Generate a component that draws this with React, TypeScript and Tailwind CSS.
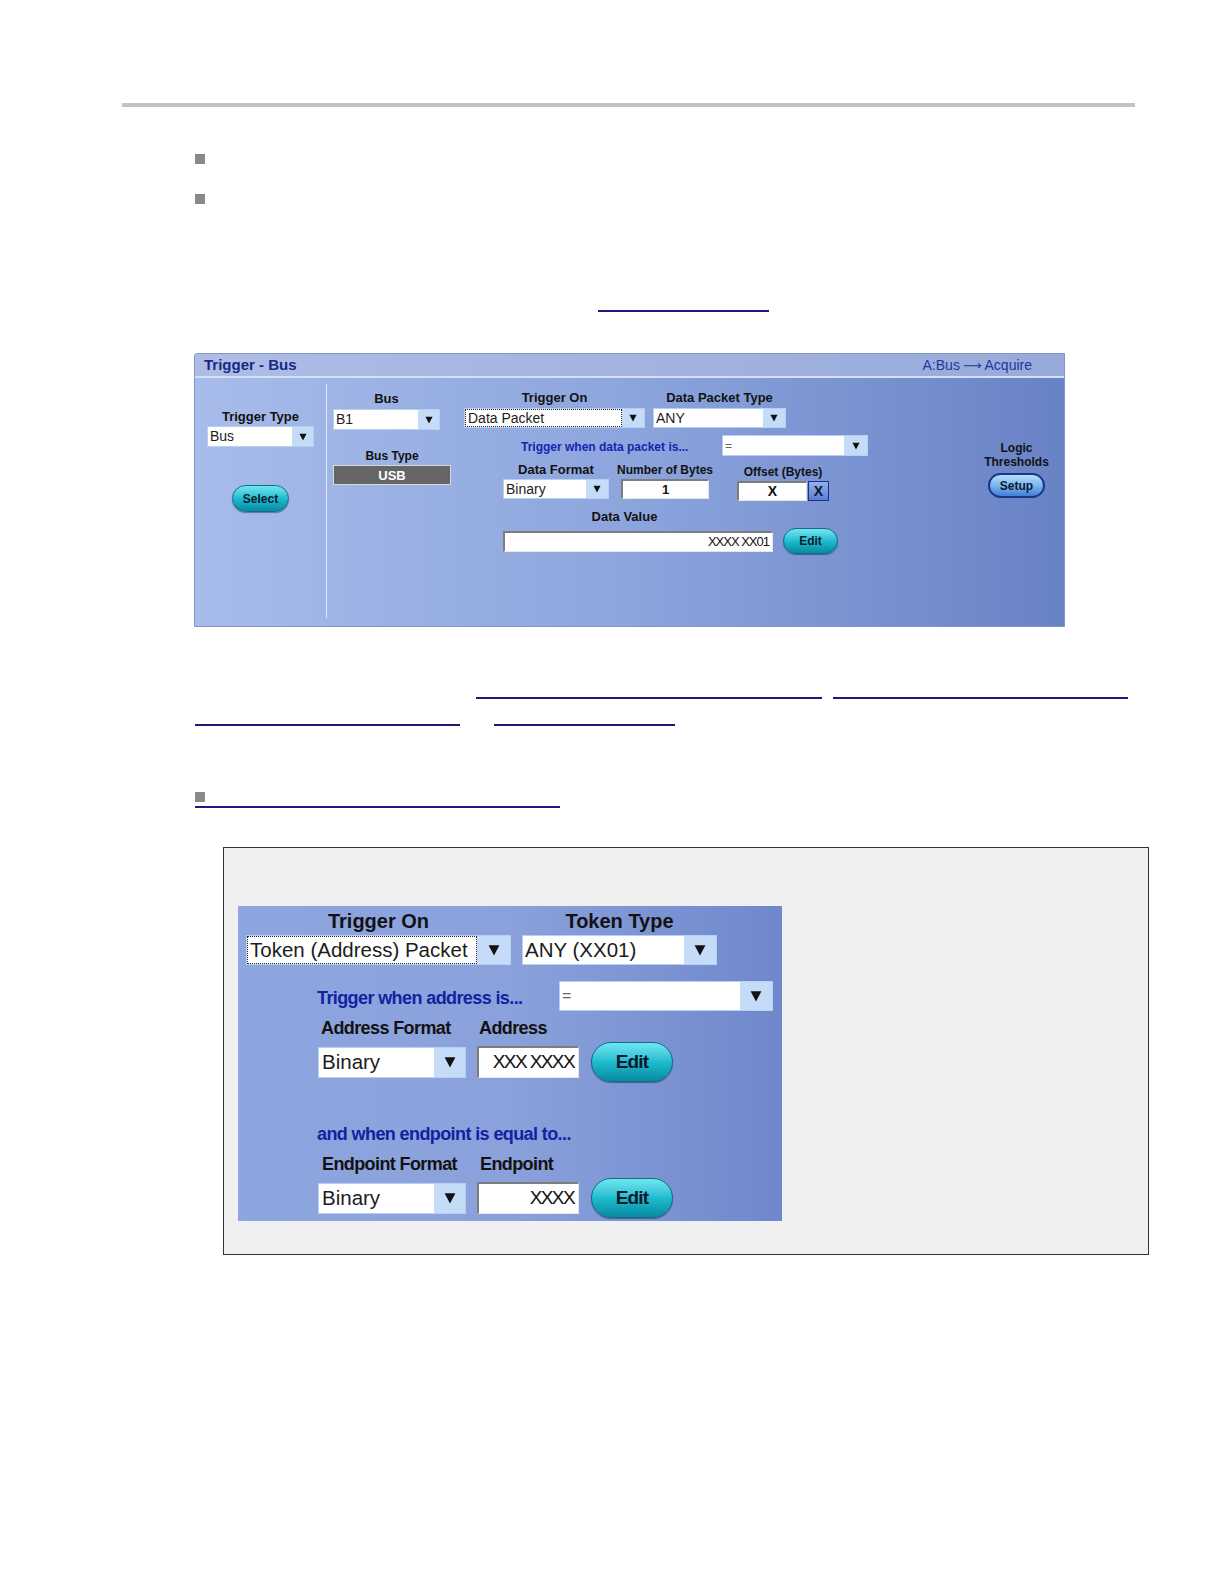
import React from "react"

type DropProps = {
  className: string
  arrowCls: string
  textCls: string
  triCls: string
  text: string
  focus?: boolean
}

function Tri({ className }: { className: string }) {
  return (
    <svg viewBox="0 0 10 10" className={className} aria-hidden="true">
      <polygon points="0.5,1 9.5,1 5,9.5" fill="#111" />
    </svg>
  )
}

function Drop({ className, arrowCls, textCls, triCls, text, focus }: DropProps) {
  return (
    <div className={`flex border border-[#b6d0f2] bg-white ${className}`}>
      <div
        className={`flex min-w-0 flex-1 items-center overflow-hidden whitespace-nowrap pl-[2px] text-[#1c1c1c] ${
          focus ? "border border-dotted border-[#222]" : ""
        } ${textCls}`}
      >
        {text}
      </div>
      <div className={`flex shrink-0 items-center justify-center bg-[#c4dcf7] ${arrowCls}`}>
        <Tri className={triCls} />
      </div>
    </div>
  )
}

function Inset({ className, children }: { className: string; children: React.ReactNode }) {
  return (
    <div
      className={`flex items-center border-t-2 border-l-2 border-r border-b border-t-[#7d7d7d] border-l-[#7d7d7d] border-r-[#e6e6e6] border-b-[#e6e6e6] bg-white text-[#111] ${className}`}
    >
      {children}
    </div>
  )
}

function Pill({ className, children }: { className: string; children: React.ReactNode }) {
  return (
    <div
      className={`flex items-center justify-center rounded-full border border-[#0c6f82] bg-gradient-to-b from-[#6fe6f2] via-[#1cbcd0] to-[#0a8aa0] font-bold text-[#0b1a2c] shadow-[0_1px_1px_rgba(0,30,60,0.45)] ${className}`}
    >
      {children}
    </div>
  )
}

const lbl = "font-bold text-[#121212] leading-[16px] whitespace-nowrap"

function TriggerBus() {
  return (
    <div className="ml-[194px] mt-[41px] flex h-[274px] w-[871px] flex-col rounded-tl-[3px] border border-[#8595c2]">
      <div className="flex h-[22px] items-center justify-between bg-gradient-to-r from-[#adbde6] to-[#98aadb] pl-[9px] pr-[32px]">
        <span className="pt-[1px] text-[15px] font-bold text-[#1a2785]">Trigger - Bus</span>
        <span className="flex items-center pt-[1px] text-[14px] text-[#27359a]">
          A:Bus
          <span className="mx-[3px] font-['DejaVu_Sans',sans-serif] text-[13px]">⟶</span>
          Acquire
        </span>
      </div>
      <div className="h-[2px] bg-[#d6e0f5]" />
      <div className="flex flex-1 bg-gradient-to-r from-[#a7bcea] via-[#8da5dd] to-[#6882c6]">
        {/* trigger type */}
        <div className="flex w-[131px] flex-col items-center">
          <div className={`mt-[31px] text-[13px] ${lbl}`}>Trigger Type</div>
          <Drop
            className="mt-[1px] h-[21px] w-[107px]"
            arrowCls="w-[21px]"
            textCls="text-[14px]"
            triCls="h-[8px] w-[8px]"
            text="Bus"
          />
          <Pill className="mt-[38px] h-[27px] w-[57px] text-[12px]">Select</Pill>
        </div>
        <div className="mb-[8px] mt-[6px] w-px bg-[#e2e9f8]" />

        {/* bus */}
        <div className="ml-[6px] flex w-[118px] flex-col">
          <div className={`mt-[13px] w-[107px] text-center text-[13px] ${lbl}`}>Bus</div>
          <Drop
            className="mt-[2px] h-[21px] w-[107px]"
            arrowCls="w-[21px]"
            textCls="text-[14px]"
            triCls="h-[8px] w-[8px]"
            text="B1"
          />
          <div className={`mt-[18px] text-center text-[12px] ${lbl}`}>Bus Type</div>
          <div className="mt-[1px] flex h-[20px] w-[118px] items-center justify-center border border-[#d8d8d8] bg-[#666] text-[13px] font-bold leading-none text-white">
            USB
          </div>
        </div>

        {/* trigger on block */}
        <div className="ml-[13px] flex w-[405px] flex-col">
          <div className="mt-[12px] flex gap-[8px]">
            <div className="flex w-[181px] flex-col items-center">
              <div className={`text-[13px] ${lbl}`}>Trigger On</div>
              <Drop
                className="mt-[2px] h-[20px] w-[181px]"
                arrowCls="w-[22px]"
                textCls="text-[14px]"
                triCls="h-[8px] w-[8px]"
                text="Data Packet"
                focus
              />
            </div>
            <div className="flex w-[133px] flex-col items-center">
              <div className={`text-[13px] ${lbl}`}>Data Packet Type</div>
              <Drop
                className="mt-[2px] h-[20px] w-[133px]"
                arrowCls="w-[22px]"
                textCls="text-[14px]"
                triCls="h-[8px] w-[8px]"
                text="ANY"
              />
            </div>
          </div>

          <div className="mt-[7px] flex h-[21px] items-center">
            <div className="ml-[57px] w-[201px] whitespace-nowrap pt-[2px] text-[12px] font-bold text-[#1624b0]">
              Trigger when data packet is...
            </div>
            <Drop
              className="h-[21px] w-[146px]"
              arrowCls="w-[23px]"
              textCls="text-[12px] text-[#666]"
              triCls="h-[8px] w-[8px]"
              text="="
            />
          </div>

          <div className="ml-[39px] mt-[6px] flex items-start">
            <div className="flex w-[106px] flex-col items-center">
              <div className={`text-[13px] ${lbl}`}>Data Format</div>
              <Drop
                className="mt-[1px] h-[20px] w-[106px]"
                arrowCls="w-[22px]"
                textCls="text-[14px]"
                triCls="h-[8px] w-[8px]"
                text="Binary"
              />
            </div>
            <div className="ml-[12px] flex w-[88px] flex-col items-center">
              <div className={`text-[12px] ${lbl}`}>Number of Bytes</div>
              <Inset className="mt-[1px] h-[20px] w-[88px] justify-center text-[13px] font-bold">1</Inset>
            </div>
            <div className="ml-[28px] mt-[2px] flex w-[92px] flex-col items-center">
              <div className={`text-[12px] ${lbl}`}>Offset (Bytes)</div>
              <div className="mt-[1px] flex">
                <Inset className="h-[20px] w-[70px] justify-center text-[14px] font-bold">X</Inset>
                <div className="ml-[1px] flex h-[20px] w-[21px] items-center justify-center border border-[#1b2f8c] bg-gradient-to-b from-[#8fb0ec] to-[#5b7fd0] text-[14px] font-bold text-[#0d1530]">
                  X
                </div>
              </div>
            </div>
          </div>

          <div className="ml-[39px] mt-[8px] flex flex-col">
            <div className={`w-[243px] text-center text-[13px] ${lbl}`}>Data Value</div>
            <div className="mt-[3px] flex items-center">
              <Inset className="h-[21px] w-[270px] justify-end pr-[3px] text-[13px] tracking-[-1px]">XXXX XX01</Inset>
              <Pill className="ml-[10px] h-[26px] w-[55px] text-[12px]">Edit</Pill>
            </div>
          </div>
        </div>

        {/* logic thresholds */}
        <div className="ml-[112px] flex w-[71px] flex-col items-center">
          <div className="mt-[63px] text-center text-[12px] font-bold leading-[14px] text-[#121212]">
            Logic
            <br />
            Thresholds
          </div>
          <div className="mt-[4px] flex h-[25px] w-[57px] items-center justify-center rounded-full border-2 border-[#1d3586] bg-gradient-to-b from-[#b4defc] via-[#7cb6f0] to-[#3f7fd6] text-[12px] font-bold text-[#0d1a33]">
            Setup
          </div>
        </div>
      </div>
    </div>
  )
}

const big = "font-bold text-[#121212] whitespace-nowrap"
const narrow = "font-bold whitespace-nowrap text-[18px] leading-[20px] tracking-[-0.6px]"

function TokenPanel() {
  return (
    <div className="flex h-[315px] w-[544px] flex-col bg-gradient-to-r from-[#8ea6df] via-[#8aa1db] to-[#6f88cd]">
      <div className="ml-[8px] mt-[4px] flex gap-[11px]">
        <div className="flex w-[265px] flex-col items-center">
          <div className={`text-[20px] leading-[22px] ${big}`}>Trigger On</div>
          <Drop
            className="mt-[3px] h-[30px] w-[265px]"
            arrowCls="w-[33px]"
            textCls="text-[20.5px]"
            triCls="h-[12px] w-[12px]"
            text="Token (Address) Packet"
            focus
          />
        </div>
        <div className="flex w-[195px] flex-col items-center">
          <div className={`text-[20px] leading-[22px] ${big}`}>Token Type</div>
          <Drop
            className="mt-[3px] h-[30px] w-[195px]"
            arrowCls="w-[32px]"
            textCls="text-[20.5px]"
            triCls="h-[12px] w-[12px]"
            text="ANY (XX01)"
          />
        </div>
      </div>

      <div className="mt-[16px] flex h-[30px] items-center">
        <div className={`ml-[79px] w-[242px] pt-[3px] text-[#1222a0] ${narrow}`}>Trigger when address is...</div>
        <Drop
          className="h-[30px] w-[214px]"
          arrowCls="w-[32px]"
          textCls="text-[16px] text-[#666]"
          triCls="h-[12px] w-[12px]"
          text="="
        />
      </div>

      <div className="ml-[83px] mt-[7px] flex text-[#121212]">
        <div className={`w-[158px] ${narrow}`}>Address Format</div>
        <div className={narrow}>Address</div>
      </div>
      <div className="ml-[80px] mt-[4px] flex items-center">
        <Drop
          className="h-[31px] w-[148px]"
          arrowCls="w-[31px]"
          textCls="text-[20.5px] pl-[3px]"
          triCls="h-[12px] w-[12px]"
          text="Binary"
        />
        <Inset className="ml-[11px] h-[32px] w-[102px] justify-end pr-[4px] text-[19px] tracking-[-1.6px]">
          XXX XXXX
        </Inset>
        <Pill className="ml-[12px] h-[40px] w-[82px] text-[19px] tracking-[-0.8px]">Edit</Pill>
      </div>

      <div className={`ml-[79px] mt-[42px] text-[#1222a0] ${narrow}`}>and when endpoint is equal to...</div>

      <div className="ml-[84px] mt-[10px] flex text-[#121212]">
        <div className={`w-[158px] ${narrow}`}>Endpoint Format</div>
        <div className={narrow}>Endpoint</div>
      </div>
      <div className="ml-[80px] mt-[4px] flex items-center">
        <Drop
          className="h-[31px] w-[148px]"
          arrowCls="w-[31px]"
          textCls="text-[20.5px] pl-[3px]"
          triCls="h-[12px] w-[12px]"
          text="Binary"
        />
        <Inset className="ml-[11px] h-[32px] w-[102px] justify-end pr-[4px] text-[19px] tracking-[-1.6px]">
          XXXX
        </Inset>
        <Pill className="ml-[12px] h-[40px] w-[82px] text-[19px] tracking-[-0.8px]">Edit</Pill>
      </div>
    </div>
  )
}

export default function App() {
  return (
    <div className="flex w-full flex-col bg-white pb-[200px] font-['Liberation_Sans',Arial,sans-serif]">
      <div className="ml-[122px] mt-[103px] h-[4px] w-[1013px] bg-[#c3c3c3]" />
      <div className="ml-[195px] mt-[47px] h-[10px] w-[10px] bg-[#8a8a8a]" />
      <div className="ml-[195px] mt-[30px] h-[10px] w-[10px] bg-[#8a8a8a]" />
      <div className="ml-[598px] mt-[106px] h-[2px] w-[171px] bg-[#1b1b7d]" />

      <TriggerBus />

      <div className="mt-[70px] flex">
        <div className="ml-[476px] h-[2px] w-[346px] bg-[#1b1b7d]" />
        <div className="ml-[11px] h-[2px] w-[295px] bg-[#1b1b7d]" />
      </div>
      <div className="mt-[25px] flex">
        <div className="ml-[195px] h-[2px] w-[265px] bg-[#1b1b7d]" />
        <div className="ml-[34px] h-[2px] w-[181px] bg-[#1b1b7d]" />
      </div>
      <div className="ml-[195px] mt-[66px] h-[10px] w-[10px] bg-[#8a8a8a]" />
      <div className="ml-[195px] mt-[4px] h-[2px] w-[365px] bg-[#1b1b7d]" />

      <div className="ml-[223px] mt-[39px] h-[408px] w-[926px] border border-[#333] bg-[#f0f0f0] pl-[14px] pt-[58px]">
        <TokenPanel />
      </div>
    </div>
  )
}
